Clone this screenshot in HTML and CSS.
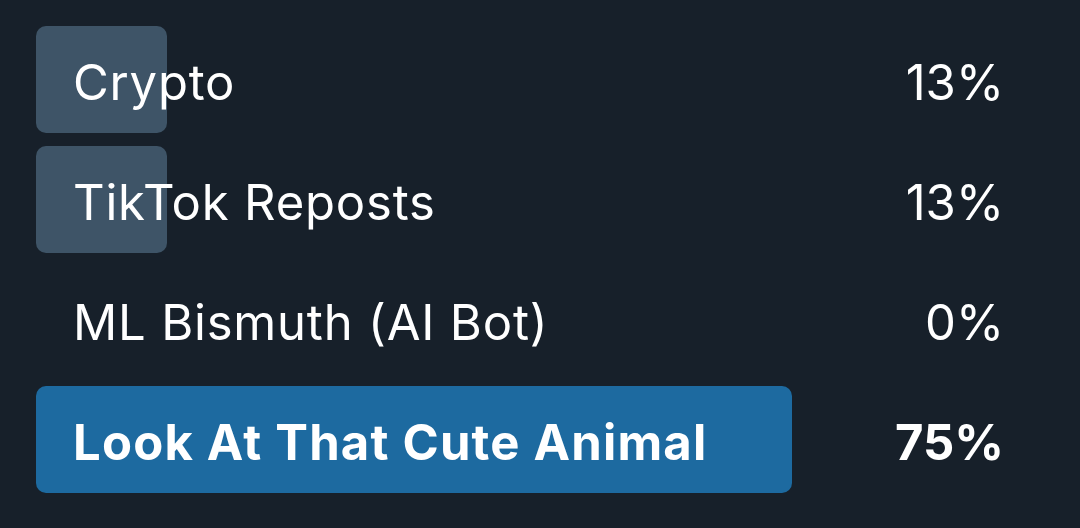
FILE: index.html
```html
<!DOCTYPE html>
<html>
<head>
<meta charset="utf-8">
<link rel="stylesheet" href="styles.css">
</head>
<body>
<div class="poll">
  <div class="row">
    <div class="bar" style="width:13%"></div>
    <div class="label">Crypto</div>
    <div class="pct">13%</div>
  </div>
  <div class="row">
    <div class="bar" style="width:13%"></div>
    <div class="label">TikTok Reposts</div>
    <div class="pct">13%</div>
  </div>
  <div class="row">
    <div class="bar" style="width:0%"></div>
    <div class="label">ML Bismuth (AI Bot)</div>
    <div class="pct">0%</div>
  </div>
  <div class="row winner">
    <div class="bar" style="width:75%"></div>
    <div class="label">Look At That Cute Animal</div>
    <div class="pct">75%</div>
  </div>
</div>
</body>
</html>
```
FILE: styles.css
```css
html, body {
  margin: 0;
  padding: 0;
  background: #17202a;
  height: 100%;
  overflow: hidden;
}
.poll {
  padding: 26px 36px 0 36px;
  display: flex;
  flex-direction: column;
  gap: 13px;
  font-family: Inter, Roboto, "Liberation Sans", sans-serif;
  color: #ffffff;
}
.row {
  display: grid;
  grid-template-columns: 1fr auto;
  align-items: center;
  height: 107px;
}
.bar {
  grid-row: 1;
  grid-column: 1 / -1;
  justify-self: start;
  align-self: stretch;
  background: #3e5467;
  border-radius: 10px;
}
.label {
  grid-row: 1;
  grid-column: 1;
  padding-left: 37px;
  padding-top: 6px;
  font-size: 49px;
  letter-spacing: 0.8px;
  line-height: 1;
}
.pct {
  grid-row: 1;
  grid-column: 2;
  padding-right: 40px;
  padding-top: 6px;
  font-size: 49px;
  line-height: 1;
}
.winner .bar {
  background: #1d6aa0;
}
.winner .label {
  font-weight: 700;
  letter-spacing: 1.2px;
}
.winner .pct {
  font-weight: 700;
}
```
